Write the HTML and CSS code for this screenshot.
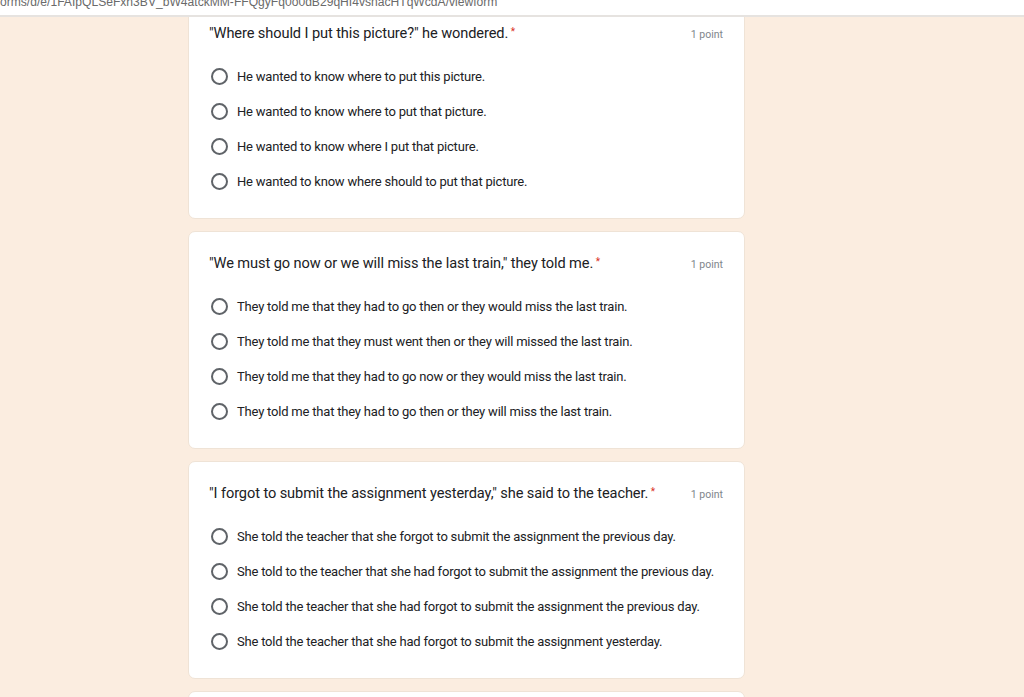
FILE: index.html
```html
<!DOCTYPE html>
<html lang="en">
<head>
<meta charset="utf-8">
<title>Form</title>
<link rel="stylesheet" href="styles.css">
</head>
<body>
<header class="urlbar">
  <div class="url">orms/d/e/1FAIpQLSeFxh3BV_bW4atckMM-FFQgyFq0o0dB29qHI4vsnacHTqWcdA/viewform</div>
</header>
<main class="page">
  <section class="card">
    <div class="qhead">
      <div class="qtitle">"Where should I put this picture?" he wondered. <span class="req">*</span></div>
      <div class="points">1 point</div>
    </div>
    <ul class="options">
      <li class="option"><span class="radio"></span><span class="label">He wanted to know where to put this picture.</span></li>
      <li class="option"><span class="radio"></span><span class="label">He wanted to know where to put that picture.</span></li>
      <li class="option"><span class="radio"></span><span class="label">He wanted to know where I put that picture.</span></li>
      <li class="option"><span class="radio"></span><span class="label">He wanted to know where should to put that picture.</span></li>
    </ul>
  </section>
  <section class="card">
    <div class="qhead">
      <div class="qtitle">"We must go now or we will miss the last train," they told me. <span class="req">*</span></div>
      <div class="points">1 point</div>
    </div>
    <ul class="options">
      <li class="option"><span class="radio"></span><span class="label">They told me that they had to go then or they would miss the last train.</span></li>
      <li class="option"><span class="radio"></span><span class="label">They told me that they must went then or they will missed the last train.</span></li>
      <li class="option"><span class="radio"></span><span class="label">They told me that they had to go now or they would miss the last train.</span></li>
      <li class="option"><span class="radio"></span><span class="label">They told me that they had to go then or they will miss the last train.</span></li>
    </ul>
  </section>
  <section class="card">
    <div class="qhead">
      <div class="qtitle">"I forgot to submit the assignment yesterday," she said to the teacher. <span class="req">*</span></div>
      <div class="points">1 point</div>
    </div>
    <ul class="options">
      <li class="option"><span class="radio"></span><span class="label">She told the teacher that she forgot to submit the assignment the previous day.</span></li>
      <li class="option"><span class="radio"></span><span class="label">She told to the teacher that she had forgot to submit the assignment the previous day.</span></li>
      <li class="option"><span class="radio"></span><span class="label">She told the teacher that she had forgot to submit the assignment the previous day.</span></li>
      <li class="option"><span class="radio"></span><span class="label">She told the teacher that she had forgot to submit the assignment yesterday.</span></li>
    </ul>
  </section>
  <section class="card"></section>
</main>
</body>
</html>
```
FILE: styles.css
```css
* { box-sizing: border-box; }
html, body {
  margin: 0;
  padding: 0;
  height: 100%;
  overflow: hidden;
}
body {
  background: #fbede0;
  font-family: Roboto, "Liberation Sans", sans-serif;
  color: #202124;
}
.urlbar {
  height: 17px;
  background: #ffffff;
  border-bottom: 2px solid #e6e3e0;
  overflow: hidden;
}
.url {
  font-family: "Liberation Sans", sans-serif;
  font-size: 12.1px;
  line-height: 16px;
  color: #6a6a6a;
  margin-top: -6px;
  white-space: nowrap;
}
.page {
  overflow: hidden;
  margin-left: 188px;
  width: 557px;
}
.card {
  background: #ffffff;
  border: 1px solid #efe3d6;
  border-radius: 7px;
  height: 218px;
  margin-bottom: 12px;
  padding: 20px 20px 0 20px;
}
.card:first-child {
  margin-top: -16px;
}
.qhead {
  display: flex;
  justify-content: space-between;
  align-items: center;
  height: 22px;
}
.qtitle {
  font-size: 14.6px;
  letter-spacing: -0.1px;
}
.req {
  color: #d93025;
  font-size: 10px;
  vertical-align: 3px;
  margin-left: -1px;
}
.points {
  font-size: 10.5px;
  color: #80868b;
  margin-right: 1px;
  margin-top: 2px;
}
.options {
  list-style: none;
  margin: 23px 0 0 0;
  padding: 0;
  display: flex;
  flex-direction: column;
  gap: 17px;
}
.option {
  display: flex;
  align-items: center;
  gap: 9px;
  height: 18px;
}
.radio {
  width: 17px;
  height: 17px;
  border: 2px solid #5f6368;
  border-radius: 50%;
  margin-left: 2px;
  flex: none;
}
.label {
  font-size: 13px;
  letter-spacing: -0.2px;
  color: #202124;
}
```
